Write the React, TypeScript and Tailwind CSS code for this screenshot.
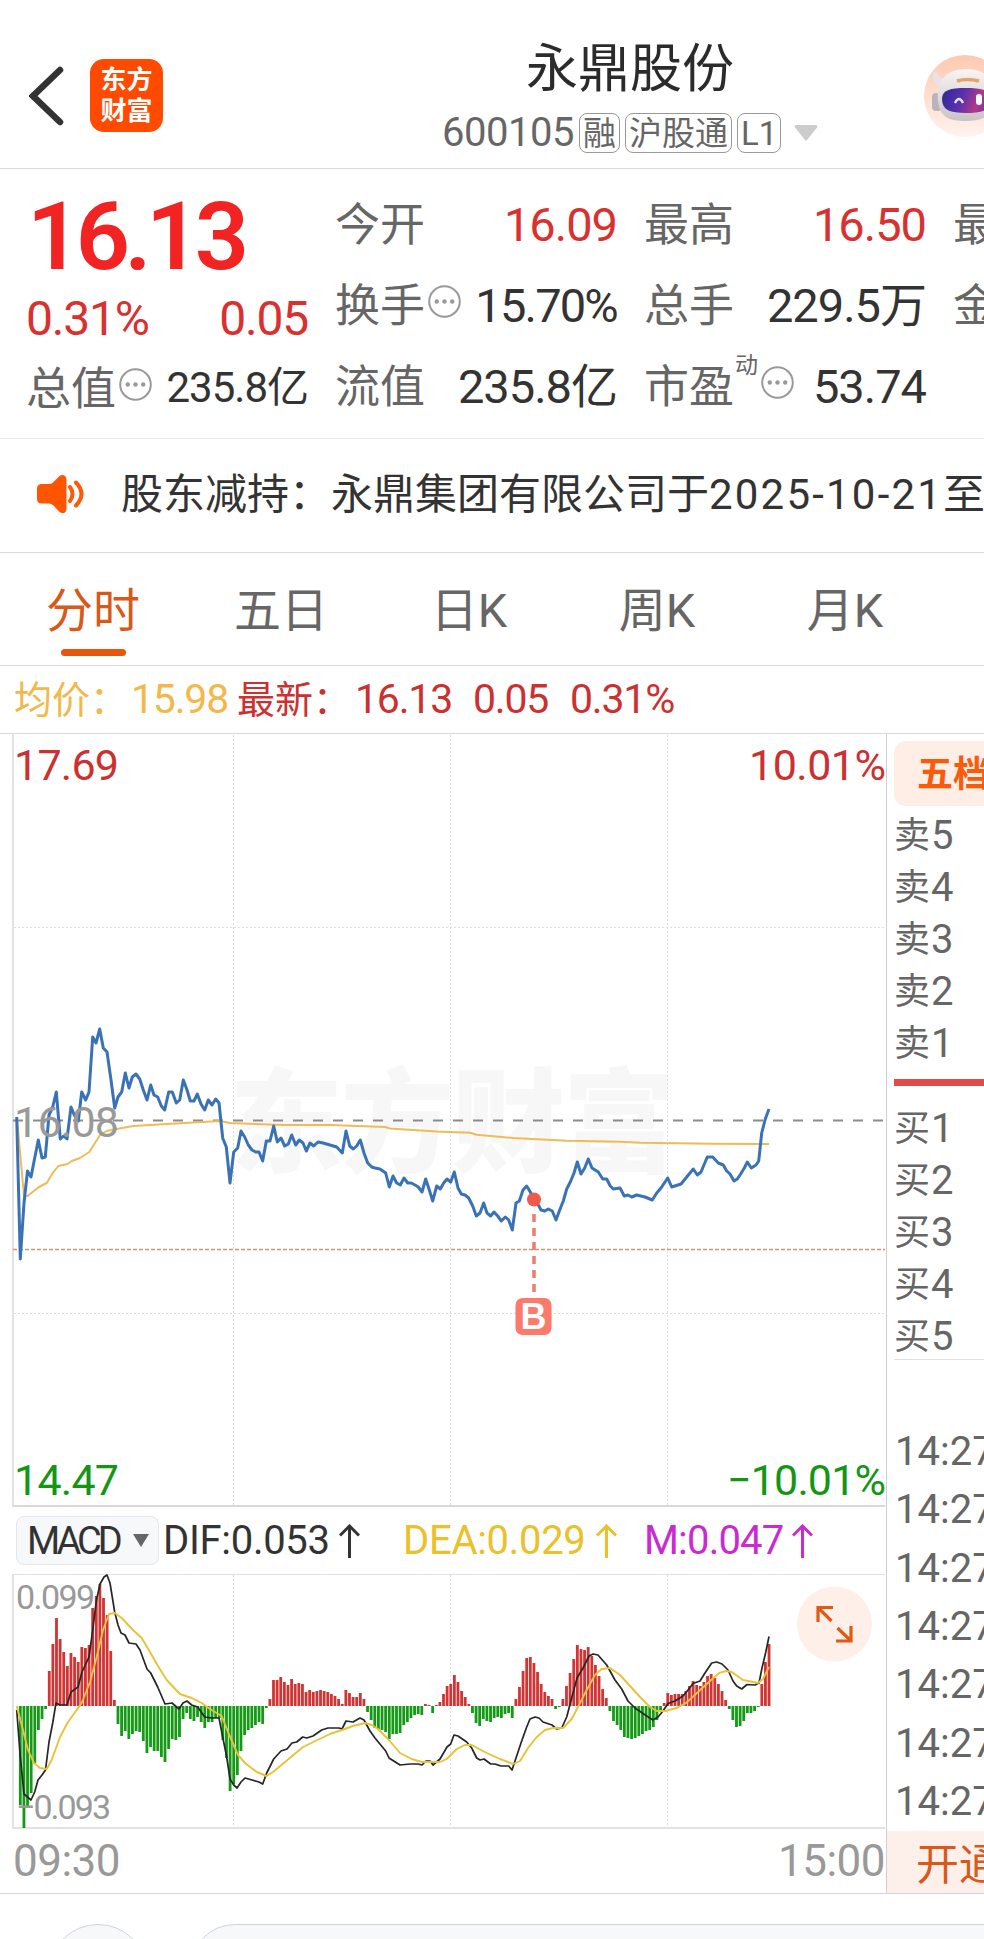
import React from 'react';
import clsx from 'clsx';

// Chart coordinates share one space: x from the left edge, y from the top of the page
const PRICE_POINTS =
  '16.7,1117 20.3,1259 24,1203 27.5,1171 31,1177 34.7,1158 38.3,1140 42,1158 45.3,1157 49,1115 52.7,1107 56.3,1092 60.3,1139 63.7,1136 67,1139 71,1107 74.3,1115 78.3,1121 81.7,1092 85.7,1100 89,1092 92.7,1037 96,1043 99.7,1029 103.3,1048 107,1052 111,1080 114.7,1108 118,1097 121.7,1092 125.3,1073 129,1088 132.3,1077 136,1074 139.7,1079 143.3,1090 147,1100 150.7,1085 154,1095 157.7,1097 161.3,1106 164.7,1110 168.7,1092 172.3,1092 176.3,1103 179.7,1100 183.3,1080 186.7,1089 190.3,1101 194,1101 197.3,1094 201,1104 204.7,1110 208.3,1100 212,1105 215.7,1099 219,1103 222.7,1138 226.3,1147 230,1183 233.7,1152 237.7,1148 241,1131 244.7,1137 248.3,1145 252,1150 255.7,1152 259,1152 262.7,1161 266.3,1141 270,1141 273.7,1126 277.3,1142 281,1138 284.7,1146 288.3,1144 291.7,1135 295.7,1145 299.3,1140 303,1143 306.3,1151 310,1143 313.7,1146 318,1142 323,1143 330,1145 336.7,1147 342.3,1153 346,1131 349.7,1146 353.3,1149 356.7,1146 360.3,1140 364,1153 367.7,1163 371.7,1167 375,1168 380,1169 385.7,1173 389.3,1187 393,1176 396.7,1183 400.3,1185 404,1178 407.7,1183 411.3,1183 415,1185 418.3,1187 422,1192 425.7,1179 429.3,1190 432.7,1201 436.7,1186 440.3,1189 443.7,1183 447,1179 450.7,1182 454.3,1172 458,1188 461.3,1194 465,1195 468.7,1198 472.7,1206 476.3,1216 480,1213 483.7,1203 487,1213 490.7,1216 494,1212 497.7,1216 501.3,1221 505.3,1217 508.7,1220 512.3,1230 516,1203 519.3,1201 523,1190 526.7,1186 530.3,1192 534,1199 537.3,1203 541,1210 544.7,1211 548.3,1209 552.3,1211 556,1220 559.7,1210 563.3,1201 566.7,1189 570.3,1182 574,1173 577.3,1162 581,1174 584.7,1168 588.3,1159 592,1168 598.3,1172 602.7,1179 606.7,1179 610.3,1186 613.3,1189 620,1188 624.3,1196 628,1195 631.7,1197 636.7,1195 645,1197 652.3,1200 656.7,1193 661,1188 667.7,1178 671.7,1187 681,1184 686.7,1177 693.3,1169 697.3,1175 701,1172 707.3,1157 712.7,1157 718.3,1163 723.3,1165 726.7,1171 730,1174 734,1181 737.3,1179 740.7,1174 744.3,1168 747.3,1162 751.3,1168 756,1165 758.7,1161 761.7,1133 765.3,1119 769,1109';

const AVERAGE_POINTS =
  '17,1118 24,1196 27.5,1196 39,1187 46.7,1183 52.7,1173 58.3,1166 67.7,1164 71.7,1161 80,1158 89.3,1152 95,1143 100,1135 106.7,1131 116.7,1129 133,1126 167,1124 220,1121 230,1123 283,1125 330,1125 385,1127 390,1128.5 436.7,1131.5 470,1132.7 476.7,1134.7 513,1138 566.7,1140.7 620,1141.7 640,1142.7 713,1143.7 769,1144';

const DIF_POINTS =
  '16.7,1710 20.3,1757 24,1794 27.5,1797 31,1800 34.7,1792 38,1780 42,1775 45.5,1770 49,1742 52.7,1723 56,1703 60,1705 67,1705 71,1692 78,1687 82,1672 89,1657 92.7,1630 96.5,1600 100,1584 104,1577 107,1575 110,1583 114.7,1612 118,1625 121,1633 125,1635 129,1643 136,1644 140,1650 147,1669 150.7,1673 157.7,1687 165,1704 172,1703 179,1709 183,1703 187,1701 191.7,1705 197.7,1707 204.7,1717 211.7,1718 219,1718 222.7,1737 226.7,1757 230,1779 233.7,1785 237,1788 241,1782 245,1778 252,1780 259,1782 262.7,1784 266.7,1773 273.7,1759 281,1751 287,1749 292,1743 296.7,1742 302.7,1737 306.7,1738 313,1736 321.7,1730 328,1728 335,1728 339,1728 342,1729 346,1721 353,1722 360,1718 364,1720 370,1731 375,1738 385.7,1751 389,1758 400,1765 410,1764 418,1764 422,1765 426,1761 430,1761 433,1765 440,1759 447,1747 450.7,1744 454,1735 458,1736 466.7,1742 471.7,1748 476.7,1758 480,1760 484,1759 490.7,1764 495,1764 501,1766 508.7,1766 512,1770 516,1758 521,1743 526.7,1727 530,1719 535,1717 539,1718 543,1722 552,1725 556.7,1729 561.7,1728 566.7,1717 571.7,1698 577,1678 583,1668 589,1656 593,1654 598,1655 606.7,1665 615,1680 621.7,1689 628,1701 635,1708 646.7,1716 653,1720 658,1717 663,1711 668,1703.5 675,1701 683,1696 688,1690 693,1683.5 700,1681 705,1673 711.7,1663 716.7,1662 722,1664 728,1670 733,1681 736.7,1686 741.7,1689 747,1684.5 755,1685 759,1683 762,1668 765.7,1652.5 769,1636.5';

const DEA_POINTS =
  '16.7,1706 23,1730 28,1750 34,1763 40,1768 46.7,1769 51.7,1760 60,1737 68,1722 81.7,1703 90,1682 96.7,1657 103,1630 109,1614 115,1613 121.7,1618 133,1630 141.7,1638 150,1652 158,1666 166.7,1680 180,1694 191.7,1698 201.7,1703 210,1709 221.7,1716 228,1732 238,1755 245,1763 256.7,1772 266.7,1776 273,1772 285,1762 303,1747 330,1734 342,1730 353,1726 365,1723 371.7,1725 378,1729 388,1739 400,1753 411.7,1759 421.7,1762 440,1762 446.7,1759 456.7,1749 465,1745 471.7,1745 486.7,1753 500,1759 513,1764 520,1761 528,1748 536.7,1737 545,1730 553,1728 563,1728 571.7,1719 578,1707 586.7,1690 595,1675 601.7,1669 610,1668 620,1675 630,1686 640,1697 650,1707 657,1711 665,1711 676.7,1708 686.7,1702.5 698,1692 711.7,1679.5 720,1672.6 726.7,1671 731.7,1672 743,1680 758,1683 763,1679 769,1667';

// One bar per minute, signed height in px
const MACD_BARS = [
  0, -99, -122, -101, -87, -57, -24, -13, -3, 35, 62, 88, 67, 54, 40, 53, 49, 44, 59, 58, 61, 98, 110, 122, 108, 91, 55, 6,
  -18, -30, -25, -33, -28, -25, -26, -35, -47, -41, -45, -45, -51, -56, -43, -33, -34, -31, -13, -7, -13, -15, -11, -16,
  -22, -16, -16, -12, -12, -34, -52, -85, -78, -69, -45, -29, -24, -22, -19, -16, -18, -2, 7, 26, 26, 29, 24, 21, 27, 22,
  23, 22, 14, 16, 14, 15, 16, 15, 14, 12, 10, 7, 2, 16, 13, 9, 9, 13, 7, -6, -14, -22, -23, -24, -26, -33, -28, -28, -27,
  -19, -16, -12, -9, -8, -9, 2, 1, -7, 1, 4, 12, 20, 22, 31, 24, 15, 9, 2, -7, -17, -20, -13, -15, -16, -12, -11, -12, -8,
  -7, -12, 7, 19, 35, 48, 49, 43, 34, 22, 14, 10, 7, -3, -1, 7, 20, 33, 47, 61, 57, 56, 59, 50, 41, 30, 17, 8, -5, -15,
  -19, -24, -31, -32, -33, -32, -30, -28, -25, -24, -21, -14, -5, 3, 13, 11, 12, 12, 12, 15, 20, 25, 21, 20, 24, 30, 32,
  28, 22, 15, 6, -3, -14, -21, -20, -15, -7, -7, -5, -1, 22, 44, 62,
];

const MACD_ZERO = 1706;
const GRID_X = [233.5, 450.5, 667.5];

const MoreIcon: React.FC = () => (
  <svg width="33" height="33" viewBox="0 0 33 33" className="shrink-0">
    <circle cx="16.5" cy="16.5" r="15.3" fill="none" stroke="#999" strokeWidth="2" />
    <circle cx="8.8" cy="16.5" r="2.2" fill="#999" />
    <circle cx="16.5" cy="16.5" r="2.2" fill="#999" />
    <circle cx="24.2" cy="16.5" r="2.2" fill="#999" />
  </svg>
);

const UpArrow: React.FC = () => (
  <svg width="21" height="34" viewBox="0 0 21 34" fill="none" stroke="currentColor" strokeWidth="3">
    <path d="M10.5 34V2M1 11.5L10.5 2L20 11.5" />
  </svg>
);

const RobotAvatar: React.FC = () => (
  <svg width="60" height="82" viewBox="0 0 60 82" className="shrink-0">
    <defs>
      <linearGradient id="halo" x1="0" y1="0" x2="0" y2="1">
        <stop offset="0" stopColor="#fdc9b0" />
        <stop offset="1" stopColor="#fff3ee" />
      </linearGradient>
      <linearGradient id="visor" x1="0" y1="0" x2="1" y2="0.2">
        <stop offset="0" stopColor="#2c2a96" />
        <stop offset="0.45" stopColor="#5a2fae" />
        <stop offset="0.8" stopColor="#b23a86" />
        <stop offset="1" stopColor="#7a35a8" />
      </linearGradient>
      <linearGradient id="helmet" x1="0" y1="0" x2="0" y2="1">
        <stop offset="0" stopColor="#f8f5f4" />
        <stop offset="1" stopColor="#c9c3c6" />
      </linearGradient>
    </defs>
    <circle cx="41" cy="41" r="41" fill="url(#halo)" />
    <path d="M9 18Q8 28 15 31L20 24Q14 22 12 16Z" fill="#e8e2e2" />
    <rect x="8" y="38" width="10" height="18" rx="4" fill="#b9b4bb" />
    <path d="M14 46C12 24 24 14 42 14S74 24 70 46C70 60 60 66 42 66S16 62 14 46Z" fill="url(#helmet)" />
    <path d="M33 26Q43 23 55 26" stroke="#e2a36c" strokeWidth="3.5" fill="none" />
    <path d="M18 44C18 35 26 33 42 33S68 35 68 45S58 58 42 58S18 55 18 44Z" fill="url(#visor)" />
    <path d="M31 48Q35 40 39 48" stroke="#d9e6ff" strokeWidth="2.4" fill="none" />
    <rect x="52" y="39" width="6" height="11" rx="3" fill="#fff" />
  </svg>
);

interface StatProps {
  label: string;
  value?: string;
  red?: boolean;
  more?: boolean;
  sup?: string;
  tight?: boolean;
  small?: boolean;
}

const Stat: React.FC<StatProps> = ({ label, value, red, more, sup, tight, small }) => (
  <div className="flex h-[81px] items-center whitespace-nowrap">
    <span className="-ml-px pt-[5px] text-[45px] text-[#666]">{label}</span>
    {sup && <span className="-mt-[39px] ml-[1px] text-[23px] text-[#666]">{sup}</span>}
    {more && (
      <span className="-mt-[5px] ml-[3px]">
        <MoreIcon />
      </span>
    )}
    <span
      className={clsx(
        'ml-auto pt-[3px]',
        small ? 'text-[42px]' : 'text-[47px]',
        tight ? 'tracking-[-1.8px]' : 'tracking-[-1px]',
        red ? 'text-[#d93030]' : 'text-[#333]'
      )}
    >
      {value}
    </span>
  </div>
);

const Header: React.FC = () => (
  <header className="flex h-[169px] border-b border-[#d9d9d9]">
    <div className="flex w-[336px] shrink-0 pl-[29px] pt-[59px]">
      <svg width="36" height="60" viewBox="0 0 36 60" className="mt-[7px]" fill="none" stroke="#333" strokeWidth="6.5" strokeLinecap="round">
        <path d="M31 4L4 30L31 56" strokeLinejoin="miter" />
      </svg>
      <div className="ml-[25px] flex h-[73px] w-[73px] flex-col items-center justify-center rounded-[14px] bg-[#ff4a00] text-[26px] leading-[31px] font-bold text-white">
        <span>东方</span>
        <span>财富</span>
      </div>
    </div>
    <div className="flex w-[588px] flex-col items-center pt-[42px]">
      <h1 className="text-[52px] leading-[56px] text-[#2b2b2b]">永鼎股份</h1>
      <div className="mt-[15px] flex h-[40px] w-[376px] items-center text-[#666]">
        <span className="w-[137px] text-[40px] tracking-[-0.5px]">600105</span>
        {['融', '沪股通', 'L1'].map((tag) => (
          <span
            key={tag}
            className="mr-[5px] flex h-[40px] items-center rounded-[8px] border border-[#999] px-[3px] text-[33px]"
          >
            {tag}
          </span>
        ))}
        <svg width="24" height="16" viewBox="0 0 24 16" className="ml-auto">
          <path d="M1.5 0H22.5Q24 1 23 2.5L13 15Q12 16 11 15L1 2.5Q0 1 1.5 0Z" fill="#ccc" />
        </svg>
      </div>
    </div>
    <div className="w-[60px] shrink-0 pt-[55px]">
      <RobotAvatar />
    </div>
  </header>
);

const Quote: React.FC = () => (
  <section className="flex h-[270px] gap-[28px] overflow-hidden border-b border-[#ececec] pt-[13px] pl-[27px]">
    <div className="w-[281px] shrink-0">
      <div className="flex h-[108px] items-center text-[95px] font-semibold tracking-[-5.5px] text-[#f22323]">16.13</div>
      <div className="-ml-px flex h-[56px] items-center justify-between pt-[2px] text-[48px] tracking-[-1.2px] text-[#d93030]">
        <span>0.31%</span>
        <span>0.05</span>
      </div>
      <Stat label="总值" value="235.8亿" more small />
    </div>
    <div className="w-[281px] shrink-0">
      <Stat label="今开" value="16.09" red />
      <Stat label="换手" value="15.70%" more tight />
      <Stat label="流值" value="235.8亿" />
    </div>
    <div className="w-[281px] shrink-0">
      <Stat label="最高" value="16.50" red />
      <Stat label="总手" value="229.5万" />
      <Stat label="市盈" value="53.74" sup="动" more />
    </div>
    <div className="w-[281px] shrink-0">
      <Stat label="最低" />
      <Stat label="金额" />
    </div>
  </section>
);

const Notice: React.FC = () => (
  <section className="flex h-[114px] items-center overflow-hidden border-b border-[#d9d9d9] pl-[37px] whitespace-nowrap">
    <svg width="48" height="40" viewBox="0 0 48 40" className="-mt-[3px] shrink-0">
      <path
        d="M5 10H12Q15 10 17 7.500L22 2.500Q25 0 28 2Q29.500 3 29.500 6V34Q29.500 37 28 38.500Q25 40 22 37.500L17 32Q15 29.500 12 29.500H5Q0 29.500 0 25V14.500Q0 10 5 10Z"
        fill="#ff5500"
      />
      <path d="M33 13Q38 20 33 27M39 8.500Q50 20 39 31.500" fill="none" stroke="#ff5a0a" strokeWidth="4" strokeLinecap="round" />
    </svg>
    <span className="-mt-[2px] ml-[36px] text-[42px] text-[#333]">
      股东减持：永鼎集团有限公司于<span className="tracking-[2.2px]">2025-10-21</span>至
    </span>
  </section>
);

const TABS = ['分时', '五日', '日K', '周K', '月K'];

const Tabs: React.FC = () => (
  <nav className="-ml-px flex h-[113px] border-b border-[#d9d9d9]">
    {TABS.map((tab, i) => (
      <div key={tab} className="flex w-[188px] shrink-0 flex-col items-center pt-[32px]">
        <span className={clsx('text-[47px] leading-[52px]', i === 0 ? 'text-[#d9591a]' : 'text-[#666]')}>{tab}</span>
        {i === 0 && <span className="mt-[12px] h-[7px] w-[65px] rounded-full bg-[#e6560c]" />}
      </div>
    ))}
    <div className="w-[45px] shrink-0" />
  </nav>
);

const PriceLegend: React.FC = () => (
  <div className="flex h-[68px] items-center border-b border-[#d9d9d9] pl-[14px] text-[#cc3030]">
    <span className="w-[117px] text-[38px] text-[#f2b84b]">均价：</span>
    <span className="w-[106px] text-[41px] tracking-[-1.2px] text-[#f2b84b]">15.98</span>
    <span className="w-[118px] text-[38px]">最新：</span>
    <span className="w-[118px] text-[41px] tracking-[-1.2px]">16.13</span>
    <span className="w-[97px] text-[41px] tracking-[-1.2px]">0.05</span>
    <span className="text-[41px] tracking-[-1.2px]">0.31%</span>
  </div>
);

const PriceChart: React.FC = () => (
  <svg width="886" height="773" viewBox="0 734 886 773" className="block">
    <text x="230" y="1163" fontSize="113" fontWeight="900" fill="#f7f7f7" textLength="446">
      东方财富
    </text>
    <g stroke="#dedede" strokeWidth="1" strokeDasharray="2 2">
      {GRID_X.map((x) => (
        <line key={x} x1={x} x2={x} y1="735" y2="1505" />
      ))}
      <line x1="14" x2="884" y1="927.5" y2="927.5" />
      <line x1="14" x2="884" y1="1313.500" y2="1313.500" />
    </g>
    <line x1="13" x2="13" y1="734" y2="1507" stroke="#e2e2e2" strokeWidth="2" />
    <line x1="13" x2="885" y1="1506" y2="1506" stroke="#d9d9d9" strokeWidth="2" />
    <line x1="13" x2="885" y1="1120.500" y2="1120.500" stroke="#8c8c8c" strokeWidth="2" strokeDasharray="10 10" />
    <line x1="13" x2="885" y1="1249.500" y2="1249.500" stroke="#c79a74" strokeWidth="1.500" strokeDasharray="4 2" />
    <polyline points={AVERAGE_POINTS} fill="none" stroke="#eebb58" strokeWidth="2" strokeLinejoin="round" />
    <polyline points={PRICE_POINTS} fill="none" stroke="#3a73b5" strokeWidth="3" strokeLinejoin="round" />
    <g fontSize="43">
      <text x="14" y="780" fill="#cc3030" textLength="105">17.69</text>
      <text x="886" y="780" fill="#cc3030" textAnchor="end" textLength="137">10.01%</text>
      <text x="14" y="1137" fill="#999" textLength="105">16.08</text>
      <text x="14" y="1495" fill="#149614" textLength="105">14.47</text>
      <text x="886" y="1495" fill="#149614" textAnchor="end" textLength="159">−10.01%</text>
    </g>
    <circle cx="534" cy="1199.500" r="7" fill="#f2584c" />
    <line x1="534" x2="534" y1="1214" y2="1292" stroke="#ee7b70" strokeWidth="3.500" strokeDasharray="8 6" />
    <rect x="515.500" y="1298" width="36" height="37" rx="7" fill="#fb7a6c" />
    <text x="533.500" y="1329" fontSize="36" fontWeight="700" fill="#fff" textAnchor="middle" fontFamily="Liberation Sans">
      B
    </text>
  </svg>
);

const MacdLegend: React.FC = () => (
  <div className="flex h-[67px] items-center pl-[16px] text-[40px] text-[#333]">
    <div className="flex h-[49px] w-[143px] items-center rounded-[8px] border border-[#e3e6ea] bg-[#f7f8fa] pl-[10px] text-[38px] tracking-[-4px]">
      <span className="w-[106px]">MACD</span>
      <svg width="16" height="13" viewBox="0 0 16 13">
        <path d="M0 0H16L8 13Z" fill="#666" />
      </svg>
    </div>
    <div className="ml-[4px] flex w-[240px] items-center gap-[9px] tracking-[-0.3px]">
      DIF:0.053
      <UpArrow />
    </div>
    <div className="flex w-[241px] items-center gap-[10px] tracking-[-0.3px] text-[#ecc029]">
      DEA:0.029
      <UpArrow />
    </div>
    <div className="flex items-center gap-[9px] tracking-[-0.8px] text-[#c92bd0]">
      M:0.047
      <UpArrow />
    </div>
  </div>
);

const MacdChart: React.FC = () => (
  <svg width="886" height="255" viewBox="0 1574 886 255" className="block">
    <g stroke="#dedede" strokeWidth="1" strokeDasharray="2 2">
      {GRID_X.map((x) => (
        <line key={x} x1={x} x2={x} y1="1575" y2="1827" />
      ))}
    </g>
    <path d="M13 1574.500H885" stroke="#e0e0e0" strokeWidth="1" />
    <path d="M13 1574V1829M13 1828H885" stroke="#e2e2e2" strokeWidth="2" />
    {MACD_BARS.map((v, i) => (
      <rect
        key={i}
        x={15.3 + i * 3.617}
        y={v > 0 ? MACD_ZERO - v : MACD_ZERO}
        width="2.800"
        height={Math.abs(v)}
        fill={v > 0 ? '#d23333' : '#149a14'}
      />
    ))}
    <polyline points={DIF_POINTS} fill="none" stroke="#262626" strokeWidth="1.700" strokeLinejoin="round" />
    <polyline points={DEA_POINTS} fill="none" stroke="#e9c235" strokeWidth="1.900" strokeLinejoin="round" />
    <g fontSize="34" fill="#999">
      <text x="16" y="1609" textLength="79">0.099</text>
      <text x="16" y="1819" textLength="95">−0.093</text>
    </g>
    <circle cx="834.500" cy="1624" r="37.500" fill="#fef0e9" />
    <path
      d="M833 1607.500H818V1622M819 1608.500L831.500 1621M836 1641H851V1626M850 1640L837.500 1628"
      fill="none"
      stroke="#de5a16"
      strokeWidth="3.200"
    />
  </svg>
);

const OrderRow: React.FC<{ side: string; level: number }> = ({ side, level }) => (
  <div className="flex h-[52px] items-center pt-[3px] pl-[7px] text-[36px] text-[#666]">
    {side}
    <span className="ml-[1px] text-[40px]">{level}</span>
  </div>
);

const OrderBook: React.FC = () => (
  <aside className="flex w-[98px] flex-col overflow-hidden border-l border-[#d0d0d0] whitespace-nowrap">
    <div className="mt-[7px] ml-[7px] flex h-[65px] w-[200px] shrink-0 items-center rounded-[12px] bg-[#feeee6] pt-[3px] pl-[23px] text-[36px] font-bold text-[#fa5a0a]">
      五档
    </div>
    <div className="mt-[2px]">
      {[5, 4, 3, 2, 1].map((n) => (
        <OrderRow key={n} side="卖" level={n} />
      ))}
    </div>
    <div className="mt-[11px] ml-[7px] h-[7px] shrink-0 bg-[#e24b4b]" />
    <div className="mt-[15px]">
      {[1, 2, 3, 4, 5].map((n) => (
        <OrderRow key={n} side="买" level={n} />
      ))}
    </div>
    <div className="mt-[-2px] ml-[7px] border-t border-[#e2e2e2] pt-[63px]">
      {Array.from({ length: 7 }, (_, i) => (
        <div key={i} className="flex h-[58.3px] items-center pl-[1px] text-[40px] text-[#666]">
          14:27
        </div>
      ))}
    </div>
    <div className="mt-auto flex h-[64px] shrink-0 items-center bg-[#fdf0ea] pt-[4px] pl-[29px] text-[43px] text-[#d9591a]">
      开通
    </div>
  </aside>
);

const BottomBar: React.FC = () => (
  <footer className="flex h-[46px] gap-[42px] overflow-hidden border-t border-[#d3d6da] pt-[30px] pl-[48px]">
    <div className="h-[100px] w-[100px] shrink-0 rounded-full border border-[#d0d4d9] bg-[#f7f8fa]" />
    <div className="h-[90px] w-[900px] shrink-0 rounded-full border border-[#d0d4d9] bg-[#f7f8fa]" />
  </footer>
);

const App: React.FC = () => (
  <div className="h-[1939px] w-[984px] overflow-hidden bg-white font-['Roboto','Noto_Sans_CJK_SC',sans-serif] leading-none">
    <Header />
    <Quote />
    <Notice />
    <Tabs />
    <PriceLegend />
    <main className="flex h-[1159px]">
      <div className="w-[886px] shrink-0">
        <PriceChart />
        <MacdLegend />
        <MacdChart />
        <div className="flex h-[64px] items-center justify-between pr-[1px] pl-[13px] text-[44px] tracking-[-0.5px] text-[#999]">
          <span>09:30</span>
          <span>15:00</span>
        </div>
      </div>
      <OrderBook />
    </main>
    <BottomBar />
  </div>
);

export default App;
